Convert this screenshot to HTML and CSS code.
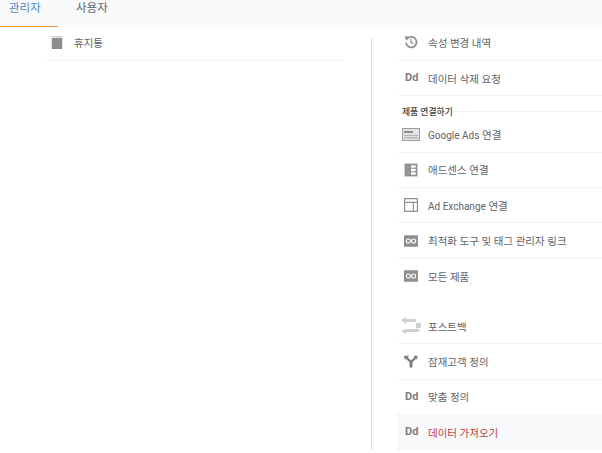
FILE: index.html
```html
<!DOCTYPE html>
<html lang="ko">
<head>
  <meta charset="UTF-8">
  <title>관리자</title>
  <link rel="stylesheet" href="styles.css">
</head>
<body>
  <div class="tabs">
    <div class="tab active">관리자</div>
    <div class="tab">사용자</div>
  </div>

  <div class="columns">
    <div class="col-left">
      <div class="row row-clipped">
        <svg class="icon" viewBox="0 0 24 24"><path fill="#c4c4c4" d="M3 2h18v2H3z"/><path fill="#8e8e8e" d="M3 5h18v19H3z"/></svg>
        <span>휴지통</span>
      </div>
    </div>

    <div class="col-right">
      <div class="row row-clipped">
        <svg class="icon" viewBox="0 0 24 24"><path fill="none" stroke="#8e8e8e" stroke-width="3" d="M6 6A9 9 0 1 1 3.500 13"/><path fill="#8e8e8e" d="M1 2l9 1-6 7z"/><path fill="none" stroke="#8e8e8e" stroke-width="2.200" d="M12 7v6l4 2"/></svg>
        <span>속성 변경 내역</span>
      </div>
      <div class="row"><span class="icon dd">Dd</span><span>데이터 삭제 요청</span></div>

      <div class="group-title"><span>제품 연결하기</span></div>

      <div class="row">
        <svg class="icon icon-wide" viewBox="0 0 18 13"><rect x=".5" y=".5" width="17" height="12" fill="#e4e4e4" stroke="#9e9e9e"/><path fill="#8e8e8e" d="M2 3h9v2H2z"/><path fill="#b5b5b5" d="M2 7h14v1H2zM2 9h14v1.500H2z"/></svg>
        <span><span class="latin">Google Ads</span> 연결</span>
      </div>
      <div class="row">
        <svg class="icon" viewBox="0 0 24 24"><path fill="#8e8e8e" d="M1 1h22v22H1z"/><path fill="#fff" d="M12 4h8v4h-8zM12 10h8v4h-8zM12 16h8v4h-8z"/><path fill="#ababab" d="M4 6h5v1.500H4zM4 11h5v1.500H4zM4 16h5v1.500H4z"/></svg>
        <span>애드센스 연결</span>
      </div>
      <div class="row">
        <svg class="icon" viewBox="0 0 24 24"><path fill="none" stroke="#8e8e8e" stroke-width="2" d="M1 1h22v22H1zM1 7.500h22M16 7.500v15.500"/></svg>
        <span><span class="latin">Ad Exchange</span> 연결</span>
      </div>
      <div class="row">
        <svg class="icon" viewBox="0 0 24 24"><use href="#link-icon"/></svg>
        <span>최적화 도구 및 태그 관리자 링크</span>
      </div>
      <div class="row row-plain">
        <svg class="icon" viewBox="0 0 24 24"><use href="#link-icon"/></svg>
        <span>모든 제품</span>
      </div>

      <div class="spacer"></div>

      <div class="row">
        <svg class="icon icon-big" viewBox="0 0 20 20"><path fill="#cfcfcf" d="M0 4l5-3v2h10v3H5v2zM20 15l-5-3v1H5l-5 2 5 3v-2h10zM15 7h3a2.500 2.500 0 0 1 0 5h-3z"/></svg>
        <span>포스트백</span>
      </div>
      <div class="row">
        <svg class="icon" viewBox="0 0 24 24"><path fill="#7d7d7d" d="M0 3h9L6.500 5.500 12 11l6-6-1.500-2H23l-.5 7-2-2-6 6v9h-5v-9L3 8 1 10z"/></svg>
        <span>잠재고객 정의</span>
      </div>
      <div class="row"><span class="icon dd">Dd</span><span>맞춤 정의</span></div>
      <div class="row selected"><span class="icon dd">Dd</span><span>데이터 가져오기</span></div>
    </div>
  </div>

  <svg class="defs" width="0" height="0">
    <symbol id="link-icon" viewBox="0 0 24 24">
      <rect x="0" y="2" width="24" height="20" rx="1" fill="#8e8e8e"/>
      <circle cx="7.500" cy="12" r="3.500" fill="none" stroke="#fff" stroke-width="1.800"/>
      <circle cx="16.500" cy="12" r="3.500" fill="none" stroke="#fff" stroke-width="1.800"/>
    </symbol>
  </svg>
</body>
</html>
```

FILE: styles.css
```css
body {
  margin: 0;
  height: 453px;
  overflow: hidden;
  background: #fff;
  font-family: Roboto, "Noto Sans CJK KR", sans-serif;
  font-size: 10.5px;
  color: #5f6368;
}

.tabs {
  display: flex;
  height: 27px;
  background: #f8fafc;
}

.tab {
  width: 58px;
  box-sizing: border-box;
  padding: 1px 0 0 9px;
  font-size: 11.500px;
  line-height: 14px;
}

.tab + .tab {
  padding-left: 18px;
}

.tab.active {
  border-bottom: 1px solid #e8912d;
  color: #4a86c5;
}

.columns {
  display: flex;
  margin-top: 11px;
}

.col-left {
  width: 300px;
  margin-left: 44px;
}

.col-left .icon {
  margin-left: 6px;
}

.col-right {
  flex: 1;
  margin-left: 27px;
  padding-left: 25px;
  border-left: 1px solid #dadce0;
}

.row {
  display: flex;
  align-items: center;
  height: 35.300px;
  box-sizing: border-box;
  border-bottom: 1px solid #f1f3f4;
}

.row-clipped {
  height: 23px;
  padding-bottom: 14px;
}

.row-plain {
  border-bottom: none;
}

.latin {
  font-size: 10px;
}

.icon {
  flex: none;
  width: 14px;
  height: 14px;
  margin: 0 10px 0 7px;
}

.icon-wide {
  width: 18px;
  height: 13px;
  margin: 0 8px 0 5px;
}

.icon-big {
  width: 20px;
  height: 20px;
  margin: 0 7px 0 4px;
}

.dd {
  margin-left: 8px;
  margin-right: 9px;
  font-size: 11px;
  font-weight: 700;
  line-height: 14px;
  color: #7d7d7d;
}

.group-title {
  display: flex;
  align-items: center;
  height: 21.200px;
  padding: 10px 0 0 5px;
  box-sizing: border-box;
  font-size: 8.800px;
  font-weight: 500;
  color: #3c4043;
}

.group-title::after {
  content: "";
  flex: 1;
  height: 1px;
  background: #f1f3f4;
}

.spacer {
  height: 15px;
}

.selected {
  background: #f8f9fa;
  color: #c5393a;
}

.defs {
  position: absolute;
}
```
